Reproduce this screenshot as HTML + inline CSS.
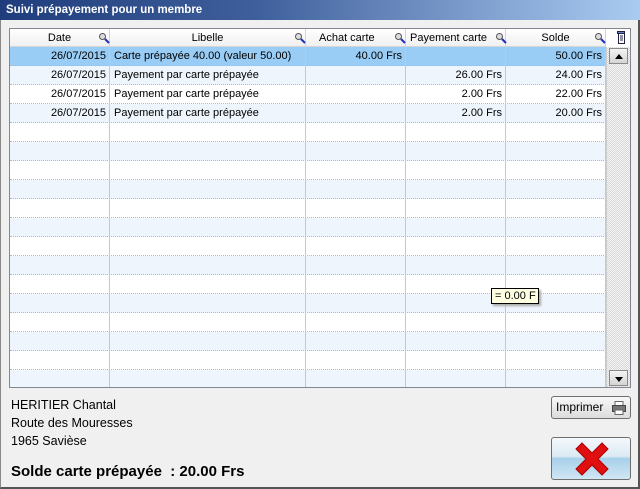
<!DOCTYPE html>
<html><head><meta charset="utf-8"><style>
*{margin:0;padding:0;box-sizing:border-box}
body{width:640px;height:489px;position:relative;overflow:hidden;background:#f0f0f0;font-family:"Liberation Sans","DejaVu Sans",sans-serif;font-size:11px;color:#000}
.win{position:absolute;left:0;top:0;width:640px;height:489px;border:1px solid #888;border-right:2px solid #555;border-bottom:2px solid #555}
.title{position:absolute;left:0;top:0;width:640px;height:20px;background:linear-gradient(90deg,#1f3d7c 0%,#3f5f9c 40%,#7f9fcf 75%,#aacbf0 100%);color:#fff;font-weight:bold;font-size:11.5px;line-height:20px;padding-left:6px}
.grid{position:absolute;left:9px;top:28px;width:622px;height:360px;border:1px solid #828790;background:#fff;overflow:hidden}
.hdr{position:absolute;left:0;top:0;height:18px;width:596px;background:linear-gradient(#fff,#f0f0f0);border-bottom:1px solid #d5d5d5}
.h{position:absolute;top:0;height:18px;line-height:18px;text-align:center;border-right:1px solid #d5d5d5}
.row{position:absolute;left:0;width:596px;height:19px;border-bottom:1px dotted #b8b8b8}
.c{position:absolute;top:0;height:18px;line-height:18px;white-space:nowrap;padding:0 4px}
.r{text-align:right}
.vl{position:absolute;top:18px;width:1px;height:342px;background:#c8c8c8}
.mag{position:absolute;top:3px;width:12px;height:12px}
.sb{position:absolute;left:596px;top:18px;width:24px;height:340px;background:repeating-conic-gradient(#d8d8d8 0 25%,#f4f4f4 0 50%) 0 0/2px 2px;border-left:1px solid #ccc}
.sbb{position:absolute;left:2px;width:19px;height:16px;background:linear-gradient(#f4f4f4,#d4d4d4);border:1px solid #8a8a8a}
.tip{position:absolute;left:491px;top:288px;width:48px;height:16px;background:#ffffe1;border:1px solid #000;box-shadow:2px 2px 2px #aaa;font-size:11px;line-height:14px;padding-left:3px}
.btn{position:absolute;border:1px solid #6f6f6f;border-radius:3px}
</style></head><body>
<div class="win"></div>
<div class="title">Suivi prépayement pour un membre</div>
<div class="grid">
 <div class="row" style="top:18px;background:#99cdf6"></div>
 <div class="row" style="top:37px;background:#eef5fc"></div>
 <div class="row" style="top:56px;background:#fff"></div>
 <div class="row" style="top:75px;background:#eef5fc"></div>
 <div class="row" style="top:94px;background:#fff"></div>
 <div class="row" style="top:113px;background:#eef5fc"></div>
 <div class="row" style="top:132px;background:#fff"></div>
 <div class="row" style="top:151px;background:#eef5fc"></div>
 <div class="row" style="top:170px;background:#fff"></div>
 <div class="row" style="top:189px;background:#eef5fc"></div>
 <div class="row" style="top:208px;background:#fff"></div>
 <div class="row" style="top:227px;background:#eef5fc"></div>
 <div class="row" style="top:246px;background:#fff"></div>
 <div class="row" style="top:265px;background:#eef5fc"></div>
 <div class="row" style="top:284px;background:#fff"></div>
 <div class="row" style="top:303px;background:#eef5fc"></div>
 <div class="row" style="top:322px;background:#fff"></div>
 <div class="row" style="top:341px;background:#eef5fc"></div>
 <div class="vl" style="left:99px"></div><div class="vl" style="left:295px"></div><div class="vl" style="left:395px"></div><div class="vl" style="left:495px"></div><div class="vl" style="left:595px"></div>
 <div class="hdr">
  <div class="h" style="left:0;width:100px">Date</div>
  <div class="h" style="left:100px;width:196px">Libelle</div>
  <div class="h" style="left:296px;width:100px;text-align:left;padding-left:13px">Achat carte</div>
  <div class="h" style="left:396px;width:100px;text-align:left;padding-left:4px">Payement carte</div>
  <div class="h" style="left:496px;width:100px">Solde</div>
 </div>
 <svg class="mag" style="left:88px" viewBox="0 0 12 12"><circle cx="4.5" cy="4.5" r="3" fill="#ddd" stroke="#555"/><path d="M7 7l4 4" stroke="#2030c0" stroke-width="2"/></svg>
 <svg class="mag" style="left:284px" viewBox="0 0 12 12"><circle cx="4.5" cy="4.5" r="3" fill="#ddd" stroke="#555"/><path d="M7 7l4 4" stroke="#2030c0" stroke-width="2"/></svg>
 <svg class="mag" style="left:384px" viewBox="0 0 12 12"><circle cx="4.5" cy="4.5" r="3" fill="#ddd" stroke="#555"/><path d="M7 7l4 4" stroke="#2030c0" stroke-width="2"/></svg>
 <svg class="mag" style="left:485px" viewBox="0 0 12 12"><circle cx="4.5" cy="4.5" r="3" fill="#ddd" stroke="#555"/><path d="M7 7l4 4" stroke="#2030c0" stroke-width="2"/></svg>
 <svg class="mag" style="left:584px" viewBox="0 0 12 12"><circle cx="4.5" cy="4.5" r="3" fill="#ddd" stroke="#555"/><path d="M7 7l4 4" stroke="#2030c0" stroke-width="2"/></svg>
 <svg style="position:absolute;left:606px;top:2px" width="10" height="13" viewBox="0 0 10 13"><rect x="1.5" y="0.5" width="7" height="2" fill="#6080c0" stroke="#224"/><rect x="2.5" y="2.5" width="6" height="10" fill="#fff" stroke="#224"/><path d="M4 5h3M4 7h3M4 9h3" stroke="#224"/></svg>
 <div style="position:absolute;top:18px;left:0;width:596px">
  <div class="c r" style="left:0;width:100px;top:0">26/07/2015</div><div class="c" style="left:100px;top:0">Carte prépayée 40.00 (valeur 50.00)</div><div class="c r" style="left:296px;width:100px;top:0">40.00 Frs</div><div class="c r" style="left:496px;width:100px;top:0">50.00 Frs</div>
  <div class="c r" style="left:0;width:100px;top:19px">26/07/2015</div><div class="c" style="left:100px;top:19px">Payement par carte prépayée</div><div class="c r" style="left:396px;width:100px;top:19px">26.00 Frs</div><div class="c r" style="left:496px;width:100px;top:19px">24.00 Frs</div>
  <div class="c r" style="left:0;width:100px;top:38px">26/07/2015</div><div class="c" style="left:100px;top:38px">Payement par carte prépayée</div><div class="c r" style="left:396px;width:100px;top:38px">2.00 Frs</div><div class="c r" style="left:496px;width:100px;top:38px">22.00 Frs</div>
  <div class="c r" style="left:0;width:100px;top:57px">26/07/2015</div><div class="c" style="left:100px;top:57px">Payement par carte prépayée</div><div class="c r" style="left:396px;width:100px;top:57px">2.00 Frs</div><div class="c r" style="left:496px;width:100px;top:57px">20.00 Frs</div>
 </div>
 <div class="sb"><div class="sbb" style="top:1px"><svg style="position:absolute;left:5px;top:5px" width="8" height="5"><path d="M0 5L4 0L8 5Z" fill="#000"/></svg></div><div class="sbb" style="top:323px"><svg style="position:absolute;left:5px;top:6px" width="8" height="5"><path d="M0 0L8 0L4 5Z" fill="#000"/></svg></div></div>
</div>
<div class="tip">= 0.00 F</div>
<div style="position:absolute;left:11px;top:396px;font-size:12.5px;line-height:18px">HERITIER Chantal<br>Route des Mouresses<br>1965 Savièse</div>
<div style="position:absolute;left:11px;top:463px;font-size:15px;font-weight:bold">Solde carte prépayée &nbsp;: 20.00 Frs</div>
<div class="btn" style="left:551px;top:396px;width:80px;height:23px;background:linear-gradient(#f8f8f8,#dcdcdc);font-size:12px;line-height:21px;padding-left:4px">Imprimer
 <svg style="position:absolute;right:4px;top:4px" width="14" height="14" viewBox="0 0 14 14"><rect x="3" y="0.5" width="8" height="4" fill="#fff" stroke="#666"/><rect x="0.5" y="4.5" width="13" height="6" fill="#777" stroke="#444"/><rect x="3" y="9" width="8" height="4.5" fill="#fff" stroke="#666"/></svg></div>
<div class="btn" style="left:551px;top:437px;width:80px;height:43px;background:linear-gradient(#f4f8fc 0%,#dceaf4 45%,#a8d0ea 50%,#d0e6f4 100%)">
 <svg style="position:absolute;left:22px;top:3px" width="36" height="36" viewBox="0 0 36 36"><path d="M2 8L8 2L18 12L28 2L34 8L24 18L34 28L28 34L18 24L8 34L2 28L12 18Z" fill="#e01010" stroke="#a00" stroke-width="1"/></svg></div>
</body></html>
